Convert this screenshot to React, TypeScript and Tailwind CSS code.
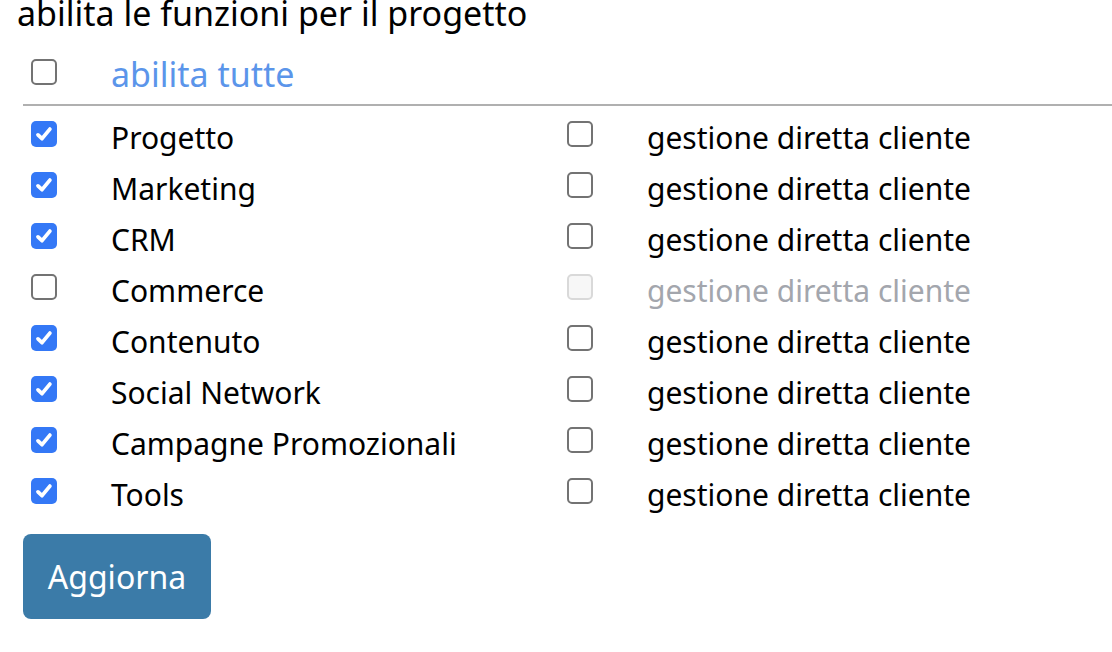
import { useState } from "react";

type Row = { label: string; on: boolean };

const initialRows: Row[] = [
  { label: "Progetto", on: true },
  { label: "Marketing", on: true },
  { label: "CRM", on: true },
  { label: "Commerce", on: false },
  { label: "Contenuto", on: true },
  { label: "Social Network", on: true },
  { label: "Campagne Promozionali", on: true },
  { label: "Tools", on: true },
];

function Box({ checked, disabled, onClick }: { checked: boolean; disabled?: boolean; onClick?: () => void }) {
  if (checked) {
    return (
      <button onClick={onClick} className="w-[26px] h-[26px] rounded-[5px] bg-[#3478f6] flex items-center justify-center shrink-0">
        <svg width="20" height="20" viewBox="0 0 18 18">
          <path d="M3.6 9.8 L7.2 13.2 L14.3 4.6" fill="none" stroke="white" strokeWidth="3.4" strokeLinecap="round" strokeLinejoin="round" />
        </svg>
      </button>
    );
  }
  return (
    <button
      onClick={disabled ? undefined : onClick}
      className={`w-[26px] h-[26px] rounded-[5px] border-2 shrink-0 ${disabled ? "border-[#d9d9d9] bg-[#f7f7f7]" : "border-[#737373] bg-white"}`}
    />
  );
}

export default function App() {
  const [rows, setRows] = useState(initialRows);
  const [direct, setDirect] = useState<boolean[]>(initialRows.map(() => false));
  const allOn = rows.every(r => r.on);

  return (
    <div className="bg-white h-[652px] overflow-hidden text-black text-[30px] leading-none" style={{ fontFamily: '"Noto Sans", sans-serif' }}>
      <div className="pl-[17px] mt-[-10px] h-[52px] leading-[46px] text-[34px]">abilita le funzioni per il progetto</div>

      <div className="pl-[23px]">
        <div className="flex items-center h-[64px] pb-[2px] border-b-2 border-[#b0b0b0]">
          <div className="w-[88px] pl-[8px] flex">
            <Box checked={allOn} onClick={() => setRows(rows.map(r => ({ ...r, on: !allOn })))} />
          </div>
          <span className="text-[#5b95ea] text-[34px] mt-[3px]">abilita tutte</span>
        </div>

        <div className="pt-[2px]">
          {rows.map((r, i) => (
            <div key={r.label} className="flex items-center h-[51px]">
              <div className="w-[88px] pl-[8px] flex">
                <Box checked={r.on} onClick={() => setRows(rows.map((x, j) => (j === i ? { ...x, on: !x.on } : x)))} />
              </div>
              <span className="w-[456px] mt-[8px]">{r.label}</span>
              <div className="w-[80px] flex">
                <Box checked={direct[i]} disabled={!r.on} onClick={() => setDirect(direct.map((d, j) => (j === i ? !d : d)))} />
              </div>
              <span className={`mt-[8px] ${r.on ? "" : "text-[#a3a6ad]"}`}>gestione diretta cliente</span>
            </div>
          ))}
        </div>

        <button className="mt-[18px] w-[188px] h-[85px] rounded-[8px] bg-[#3b7ba8] text-white text-[32px]">Aggiorna</button>
      </div>
    </div>
  );
}
